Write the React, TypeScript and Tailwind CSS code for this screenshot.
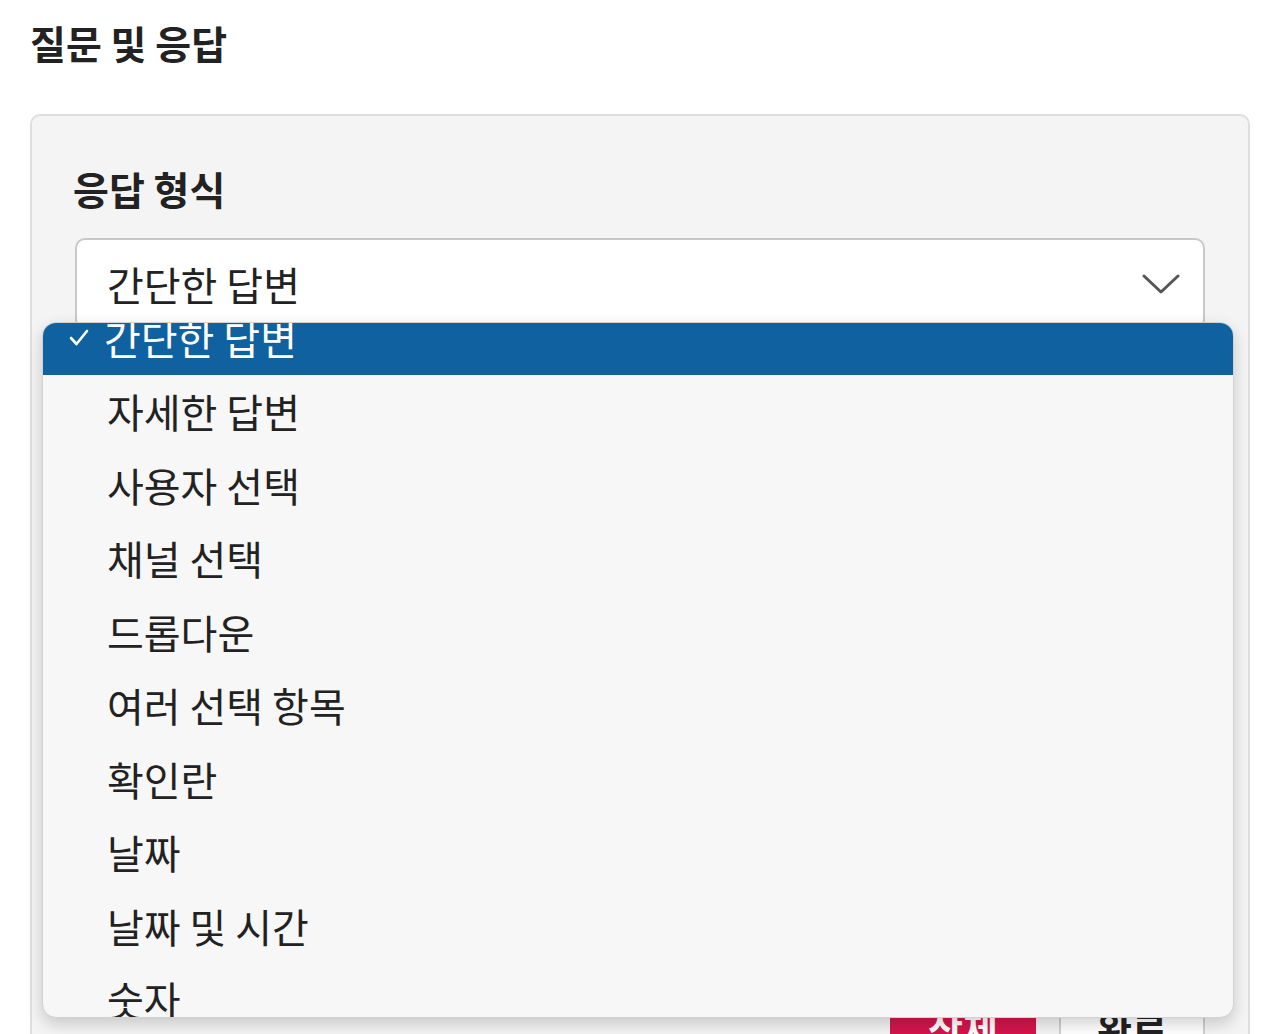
import React from "react";

const items = [
  "간단한 답변",
  "자세한 답변",
  "사용자 선택",
  "채널 선택",
  "드롭다운",
  "여러 선택 항목",
  "확인란",
  "날짜",
  "날짜 및 시간",
  "숫자",
];

export default function App() {
  return (
    <div
      className="relative w-[1280px] h-[1034px] overflow-hidden bg-white text-[#1a1a1a]"
      style={{ fontFamily: '"Noto Sans CJK KR", "Noto Sans", sans-serif' }}
    >
      <div className="pt-[19px] pl-[30px] pr-[30px]">
        <h1 className="text-[39px] leading-[46px] font-bold text-[#222]">질문 및 응답</h1>
        <div className="mt-[49px] rounded-[10px] border-2 border-[#dedede] bg-[#f4f4f4] pl-[41px] pr-[43px] pt-[44px] pb-[40px]">
          <div className="text-[39px] leading-[56px] font-bold text-[#222]">응답 형식</div>
          <div className="ml-[2px] mt-[22px] flex h-[92px] items-center justify-between rounded-[10px] border-2 border-[#c8c8c8] bg-white pl-[30px] pr-[23px]">
            <span className="text-[40px] leading-[56px] text-[#222]">간단한 답변</span>
            <svg width="38" height="22" viewBox="0 0 38 22" fill="none">
              <polyline points="2,3 19,19 36,3" stroke="#555" strokeWidth="3" strokeLinecap="round" strokeLinejoin="round" />
            </svg>
          </div>
          <div className="h-[668px]" />
          <div className="flex justify-end gap-[23px]">
            <button className="h-[60px] w-[146px] rounded-[6px] bg-[#d4154c] text-[38px] leading-[60px] font-bold text-white">삭제</button>
            <button className="h-[60px] w-[146px] rounded-[6px] border-2 border-[#cfcfcf] bg-white text-[38px] leading-[56px] font-bold text-[#222]">완료</button>
          </div>
        </div>
      </div>

      <div className="absolute left-[42px] top-[322px] h-[696px] w-[1192px] overflow-hidden rounded-[14px] border border-[#d2d2d2] bg-[#f7f7f7] shadow-[0_6px_16px_rgba(0,0,0,0.18)]">
        <div className="-mt-[22px]">
          {items.map((t, i) =>
            i === 0 ? (
              <div key={t} className="relative flex h-[73.5px] items-center bg-[#0f61a0] pl-[61px] text-white">
                <svg className="absolute left-[26px] top-[28px]" width="20" height="17" viewBox="0 0 20 17" fill="none">
                  <polyline points="2,9 7.5,15 18,2" stroke="white" strokeWidth="2.6" strokeLinecap="round" strokeLinejoin="round" />
                </svg>
                <span className="text-[40px] leading-[56px]">{t}</span>
              </div>
            ) : (
              <div key={t} className="flex h-[73.5px] items-center pl-[64px] text-[#222]">
                <span className="text-[40px] leading-[56px]">{t}</span>
              </div>
            )
          )}
        </div>
      </div>
    </div>
  );
}
